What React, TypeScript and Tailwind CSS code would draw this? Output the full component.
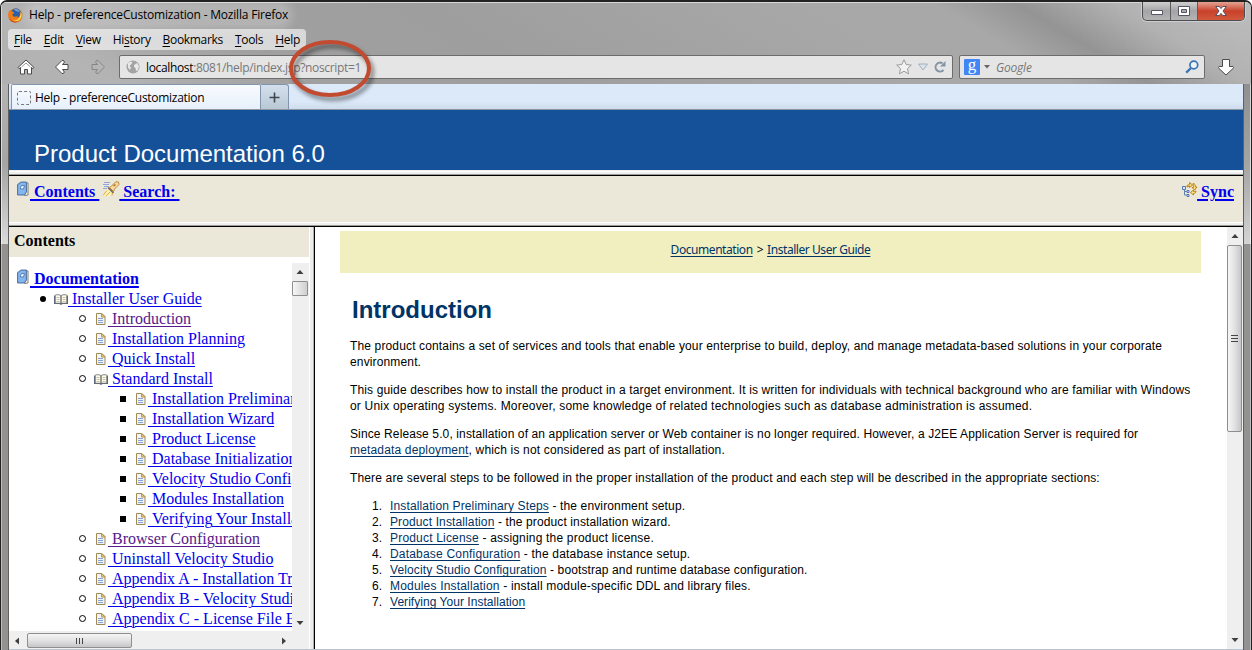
import React from 'react';

const ui = "font-['Open_Sans',sans-serif]";

function FileIcon() {
  return (
    <svg width="10" height="12" viewBox="0 0 10 12" className="shrink-0">
      <path d="M.5.5h5.500l3 3v8h-8.500z" fill="#eef4fd" stroke="#a08a50" />
      <path d="M5.500 .5v3.500h3.500z" fill="#f0c878" stroke="#b89850" />
      <path d="M2 5.500h5M2 7.500h5M2 9.500h5" stroke="#8aa3cf" />
    </svg>
  );
}

function BookOpen() {
  return (
    <svg width="14" height="11" viewBox="0 0 14 11" className="shrink-0">
      <path d="M0 1.500h1.500v-1h4L7 1.500 8.500.5h4v1H14V10H8.500L7 11 5.500 10H0z" fill="#5c6680" />
      <path d="M1.500 1H5.500L6.500 2v7H1.500zM12.500 1H8.500L7.500 2v7h5z" fill="#fffdf0" stroke="#8a8468" strokeWidth=".5" />
      <path d="M2.500 3.500h3M2.500 5.500h3M2.500 7.500h3M8.500 3.500h3M8.500 5.500h3M8.500 7.500h3" stroke="#c2bfaa" />
    </svg>
  );
}

function BookBlue() {
  return (
    <svg width="12" height="16" viewBox="0 0 12 16" className="shrink-0">
      <path d="M9 1.500l2 .5v12l-3.500.5z" fill="#fff7dc" stroke="#6f6f6c" strokeWidth=".9" />
      <path d="M.5 3.500L4 1h5.500v10L7.500 14h-7z" fill="#6ca0dc" stroke="#5878a4" />
      <path d="M1.500 4L4 2h4.500v8.500L7 13H1.500z" fill="#85b6ee" />
      <path d="M3.500 6.500l1-2h3l-1 3.500h-3z" fill="#e4f2ff" stroke="#416da5" strokeWidth=".8" />
    </svg>
  );
}

function SearchLight() {
  return (
    <svg width="17" height="16" viewBox="0 0 17 16" className="shrink-0">
      <path d="M1 1.500h6M0 3.500h6M1 5.500h5M0 7.500h4" stroke="#8ea6d6" />
      <path d="M4 8l5 4-2 3H0z" fill="#fff3b0" />
      <path d="M4 9.500L0 14.500M7 11L3 15M9.500 11.500l-.5 3" stroke="#dca94c" />
      <path d="M6.500 6.500l4 4 1-2.500 4.500-4.500-.5-2.500-2.500-.3L8.500 5z" fill="#f9d9a0" stroke="#c08a3a" />
      <path d="M10.500 5l2-1.500" stroke="#9c7030" strokeWidth="1.500" />
      <path d="M5 6.500l5.500 5.500" stroke="#7b6350" strokeWidth="1.500" />
    </svg>
  );
}

function SyncIcon() {
  return (
    <svg width="16" height="15" viewBox="0 0 16 15" className="shrink-0">
      <path d="M2.500 6v7h3M2.500 9.500h3" stroke="#6580ad" fill="none" />
      <path d="M.5 4.500h3v3h-3zM5 8.500h2v2H5zM5 12.500h2v2H5z" fill="#dfe9fa" stroke="#5477b4" />
      <path d="M5 5V3.500L7.500 2.500V.5l3 2.500-3 2.500V4z" fill="#ffe07a" stroke="#b57a16" strokeWidth=".9" />
      <path d="M11 1.500c1.800 0 2.500 1.500 2.500 3.500H15l-2.500 3L10 5.500h1.500z" fill="#ffe07a" stroke="#b57a16" strokeWidth=".9" />
      <path d="M14 9c0 1.500-1 2.500-2.500 2.500V13L8.500 10.500 11.500 8v1.500z" fill="#ffe07a" stroke="#b57a16" strokeWidth=".9" />
    </svg>
  );
}

function Firefox() {
  return (
    <svg width="15" height="15" viewBox="0 0 15 15" className="shrink-0">
      <circle cx="7.500" cy="7.500" r="7" fill="#e06a12" />
      <circle cx="8" cy="5.500" r="5" fill="#2f5fa6" />
      <path d="M6 1.500c2-1 5 0 6 2-1 0-3 1-6-2z" fill="#6fa6de" />
      <path d="M.8 3.500c.8-1 1.500-1.500 2-1.500.2 1 1 1.500 2 1.800 1 .2 1.500.7 1 1.500l-1.300 1c-.2 2 1.500 3 3.500 2.200 1.500-.5 2 .3 1 1.200 2.500-.3 4-2.500 3.500-6 1.700 2 1.700 5.500-.5 8-2.700 3-8 3-10.500 0C-.2 9.500 0 6 .8 3.500z" fill="#ee7d1a" />
      <path d="M12.500 3.700c1.800 2.500 1.500 5.800-.8 8-1.600 1.700-4.700 2-6.700 1 4 .2 8-2.700 7.500-9z" fill="#fbd34a" />
      <path d="M.8 8.500c1 4.500 6 6.500 10 4.500-3 2.500-9 2-10-4.500z" fill="#b92e15" />
    </svg>
  );
}

function NavArrow({ dim, right }: { dim?: boolean; right?: boolean }) {
  return (
    <svg width="16" height="16" viewBox="0 0 16 16" className={right ? 'shrink-0 scale-x-[-1]' : 'shrink-0'}>
      <path
        d="M1.500 8L8 1.500q1-.7 2 .5t-.3 2L8.500 5.500H14v5H8.500l1.200 1.500q1 1 .2 2t-2 .4z"
        fill={dim ? '#b5b5b5' : '#fff'}
        stroke={dim ? '#858585' : '#4b4b4b'}
        strokeLinejoin="round"
      />
    </svg>
  );
}

function Tri({ dir }: { dir: 'up' | 'down' | 'left' | 'right' }) {
  const d = {
    up: 'M0.500 6L4 2l3.500 4z',
    down: 'M0.500 2L4 6l3.500-4z',
    left: 'M6 .5L2 4l4 3.500z',
    right: 'M2 .5L6 4 2 7.500z',
  }[dir];
  return (
    <svg width="8" height="8" viewBox="0 0 8 8" className="shrink-0">
      <path d={d} fill="#3f3f3f" />
    </svg>
  );
}

function MenuItem({ a, k, b }: { a?: string; k: string; b: string }) {
  return (
    <span>
      {a}
      <span className="underline decoration-1 underline-offset-2">{k}</span>
      {b}
    </span>
  );
}

type Row = { level: 1 | 2 | 3; text: string; open?: boolean; visited?: boolean };

const rows: Row[] = [
  { level: 1, text: 'Installer User Guide', open: true },
  { level: 2, text: 'Introduction', visited: true },
  { level: 2, text: 'Installation Planning' },
  { level: 2, text: 'Quick Install' },
  { level: 2, text: 'Standard Install', open: true },
  { level: 3, text: 'Installation Preliminary Steps' },
  { level: 3, text: 'Installation Wizard' },
  { level: 3, text: 'Product License' },
  { level: 3, text: 'Database Initialization' },
  { level: 3, text: 'Velocity Studio Configuration' },
  { level: 3, text: 'Modules Installation' },
  { level: 3, text: 'Verifying Your Installation' },
  { level: 2, text: 'Browser Configuration', visited: true },
  { level: 2, text: 'Uninstall Velocity Studio' },
  { level: 2, text: 'Appendix A - Installation Troubleshooting' },
  { level: 2, text: 'Appendix B - Velocity Studio' },
  { level: 2, text: 'Appendix C - License File Errors' },
];

const indent = { 1: 'pl-[31px]', 2: 'pl-[71px]', 3: 'pl-[111px]' };

function TreeRow({ row }: { row: Row }) {
  return (
    <li className={`flex h-5 items-center whitespace-nowrap ${indent[row.level]}`}>
      <span className="flex w-[14px] shrink-0 items-center pb-px">
        {row.level === 1 && <span className="size-[6px] rounded-full bg-black" />}
        {row.level === 2 && <span className="-ml-px size-[7px] rounded-full border border-black" />}
        {row.level === 3 && <span className="size-[6px] bg-black" />}
      </span>
      <span className={row.open ? 'flex w-[14px] shrink-0' : 'flex w-[14px] shrink-0 pb-px pl-[2px]'}>
        {row.open ? <BookOpen /> : <FileIcon />}
      </span>
      <a className={`shrink-0 leading-5 underline decoration-1 underline-offset-2 ${row.visited ? 'text-[#551a8b]' : 'text-[#0000ee]'}`}>
        {'\u00a0' + row.text}
      </a>
    </li>
  );
}

const steps: [string, string, string][] = [
  ['Installation Preliminary Steps', ' - the environment setup.', 'tracking-[0.14px]'],
  ['Product Installation', ' - the product installation wizard.', 'tracking-[0.12px]'],
  ['Product License', ' - assigning the product license.', 'tracking-[0.19px]'],
  ['Database Configuration', ' - the database instance setup.', 'tracking-[0.19px]'],
  ['Velocity Studio Configuration', ' - bootstrap and runtime database configuration.', 'tracking-[0.11px]'],
  ['Modules Installation', ' - install module-specific DDL and library files.', 'tracking-[0.18px]'],
  ['Verifying Your Installation', '', 'tracking-[0.04px]'],
];

const link = 'text-[#003366] underline decoration-1 underline-offset-2';
const boldLink = 'font-bold text-[#0000ee] underline decoration-2 underline-offset-2';

function WindowButtons() {
  return (
    <div className="-mt-px flex h-[19px] w-[103px] overflow-hidden rounded-b-[5px] border border-t-0 border-[#4c4c50] bg-gradient-to-b from-[#d0d0d0] via-[#a4a4a6] via-50% to-[#b4b4b5] shadow-[0_0_0_1px_#cfcfcf]">
      <div className="flex w-[28px] items-center justify-center border-r border-[#5c5c5f] pt-[3px]">
        <svg width="12" height="5" viewBox="0 0 12 5"><path d="M.5.5h11v4h-11z" fill="#fff" stroke="#555566" /></svg>
      </div>
      <div className="flex w-[27px] items-center justify-center border-r border-[#5c5c5f]">
        <svg width="12" height="10" viewBox="0 0 12 10">
          <path d="M.5.5h11v9h-11z" fill="#fff" stroke="#555566" />
          <path d="M3.500 3.500h5v3h-5z" fill="#aaa" stroke="#555566" />
        </svg>
      </div>
      <div className="flex flex-1 items-center justify-center bg-gradient-to-b from-[#e4a294] via-[#c8402a] via-50% to-[#d2583c]">
        <svg width="12" height="10" viewBox="0 0 12 10">
          <path d="M.7.5h3.500L6 2.600 7.800.5h3.500L8 5l3.300 4.500H7.800L6 7.400 4.200 9.500H.7L4 5z" fill="#fff" stroke="#4c4656" strokeWidth=".9" />
        </svg>
      </div>
    </div>
  );
}

export default function App() {
  return (
    <div className="relative flex h-[650px] w-[1252px] flex-col overflow-hidden rounded-t-[7px] border-x border-t-2 border-[#222] bg-[#9d9d9d] text-black">
      <div className="flex h-[82px] shrink-0 flex-col border-t border-l border-[#d8d8d8] bg-[linear-gradient(31deg,#b0b0b0_0%,#b4b4b4_8%,#a0a0a0_22%,#9e9e9e_40%,#a8a8a8_68%,#a8a8a8_77%,#949494_83%,#b2b2b2_90%,#bdbdbd_100%)]">
        <div className="flex h-[26px] justify-between pr-[6px] pl-[6px]">
          <div className="flex items-center gap-[6px] pb-[2px]">
            <Firefox />
            <span className={`${ui} rounded-full bg-white/20 text-[12px] leading-5 tracking-[-0.2px] whitespace-nowrap shadow-[0_0_9px_5px_rgba(255,255,255,0.2)]`}>
              Help - preferenceCustomization - Mozilla Firefox
            </span>
          </div>
          <WindowButtons />
        </div>
        <div className={`${ui} ml-[6px] flex h-[21px] w-[298px] items-center justify-between rounded-[4px] bg-white/60 pr-[6px] pl-[6px] text-[12px] tracking-[-0.3px]`}>
          <MenuItem k="F" b="ile" />
          <MenuItem k="E" b="dit" />
          <MenuItem k="V" b="iew" />
          <MenuItem a="Hi" k="s" b="tory" />
          <MenuItem k="B" b="ookmarks" />
          <MenuItem k="T" b="ools" />
          <MenuItem k="H" b="elp" />
        </div>
        <div className={`${ui} flex h-[34px] items-center pb-[1px] pl-[15px] text-[12px]`}>
          <svg width="18" height="16" viewBox="0 0 18 16">
            <path d="M1 8.500L9 1l8 7.500-1 1.200-1.500-1.200V15h-4v-4.500h-3V15h-4V8.500L2 9.700z" fill="#fff" stroke="#4a4a4a" strokeLinejoin="round" />
            <path d="M4.500 8L9 4l4.500 4" fill="none" stroke="#777" strokeWidth=".8" />
          </svg>
          <div className="ml-[19px] flex"><NavArrow /></div>
          <div className="ml-[20px] flex"><NavArrow dim right /></div>
          <div className="ml-[13px] flex h-6 w-[834px] items-center rounded-[2px] border border-[#6c6c6c] bg-[#e5e5e5] pr-[5px] pl-[6px]">
            <svg width="14" height="14" viewBox="0 0 14 14">
              <circle cx="7" cy="7" r="6.500" fill="#a3a3a3" />
              <path d="M2 3l3-1.500 1.500 1L5 4.500 3.500 6 5 7.500 4 10 2 7.500zM8 5l3-2 2 3-1 4-2 1-.5-3L8 7z" fill="#e8e8e8" />
            </svg>
            <span className="ml-[6px] pt-[2px] tracking-[-0.34px] whitespace-nowrap text-[#777]">
              <span className="tracking-[-0.35px] text-black">localhost</span>:8081/help/index.jsp?noscript=1
            </span>
            <svg className="ml-auto" width="16" height="16" viewBox="0 0 16 16">
              <path d="M8 .8l2.200 4.700 5.100.6-3.800 3.500 1 5.200L8 12.200l-4.500 2.600 1-5.200L.7 6.100l5.100-.6z" fill="#f2f2f2" stroke="#9a9a9a" />
            </svg>
            <svg className="ml-[6px]" width="10" height="8" viewBox="0 0 10 8"><path d="M.5 1h9L5 7z" fill="#dbe3ec" stroke="#a3b0bd" /></svg>
            <svg className="mr-px ml-[6px]" width="12" height="12" viewBox="0 0 12 12">
              <path d="M9.500 9A4.500 4.500 0 1 1 8.500 2.300" fill="none" stroke="#8395a5" strokeWidth="2" />
              <path d="M11.500 0v5.500H6z" fill="#8395a5" />
            </svg>
          </div>
          <div className="ml-[6px] flex h-6 w-[246px] items-center rounded-[2px] border border-[#6c6c6c] bg-[#e5e5e5] pr-[5px] pl-[4px]">
            <span className="flex size-4 items-center justify-center rounded-[1px] bg-[#4285f4] pb-[3px] font-['Liberation_Serif',serif] text-[17px] leading-4 text-white">g</span>
            <svg className="ml-[4px]" width="6" height="4" viewBox="0 0 6 4"><path d="M0 0h6L3 3.500z" fill="#666" /></svg>
            <span className="ml-[6px] pt-[2px] tracking-[-0.2px] text-[#777] italic">Google</span>
            <svg className="ml-auto" width="14" height="14" viewBox="0 0 14 14">
              <circle cx="8.800" cy="5" r="3.900" fill="#eef4fa" stroke="#3a76b0" strokeWidth="1.700" />
              <path d="M6 8L1.200 12.700" stroke="#3a76b0" strokeWidth="2.400" />
            </svg>
          </div>
          <svg className="ml-[12px]" width="18" height="18" viewBox="0 0 18 18">
            <path d="M5.500 1.500h7v7H16q1 1 0 2l-7 6.500-7-6.500q-1-1 0-2h3.500z" fill="#fff" stroke="#4d4d4d" strokeLinejoin="round" />
          </svg>
        </div>
      </div>

      <div className="flex min-h-0 flex-1">
        <div className="flex w-[8px] shrink-0 flex-col border-r border-[#606060]">
          <div className="h-[160px] border-l border-white/60 bg-gradient-to-b from-[#b4b4b4] via-[#a4a4a4] to-[#dadada]" />
          <div className="flex-1 border-l border-white/40 bg-[#949290]" />
        </div>

        <div className="flex w-[1234px] flex-col bg-white">
          <div className={`${ui} flex h-[26px] shrink-0 items-stretch border-b border-[#8b97a3] bg-gradient-to-b from-[#dbe9f9] from-70% to-[#cddbea] pl-[2px] text-[12px]`}>
            <div className="flex w-[250px] items-center rounded-t-[2px] border-x border-t border-[#8295ac] bg-gradient-to-b from-[#f8fbff] to-[#e7f0fb] pt-px pl-[5px]">
              <span className="size-[14px] rounded-[2px] border border-dashed border-[#777]" />
              <span className="ml-[4px] tracking-[-0.28px] whitespace-nowrap">Help - preferenceCustomization</span>
            </div>
            <div className="flex w-[28px] items-center justify-center rounded-tr-[3px] border-t border-r border-[#8295ac] bg-gradient-to-b from-[#d3dfec] to-[#bac8d6] pt-px">
              <svg width="11" height="11" viewBox="0 0 11 11"><path d="M5.500.5v10M.5 5.500h10" stroke="#3e4650" strokeWidth="1.600" /></svg>
            </div>
          </div>

          <div className="flex h-[60px] shrink-0 items-end bg-[#145199] pl-[25px] font-['Liberation_Sans',Arial,sans-serif] text-[24px] leading-8 text-white">
            Product Documentation 6.0
          </div>
          <div className="flex h-[6px] shrink-0 flex-col border-b border-black bg-[#efefed]">
            <div className="h-[1px]" />
            <div className="h-[1px] bg-white" />
            <div className="flex-1" />
            <div className="h-[1px] bg-[#9c9c98]" />
          </div>
          <div className="flex h-[46px] shrink-0 items-start justify-between bg-[#ebe8d9] pt-[5px] pr-[9px] pl-[8px] font-['Liberation_Serif',serif] text-[16px] leading-[22px]">
            <div className="flex">
              <BookBlue />
              <a className={`ml-[1px] ${boldLink}`}>{'\u00a0Contents\u00a0'}</a>
              <span className="ml-[4px] -mr-px flex"><SearchLight /></span>
              <a className={boldLink}>{'\u00a0Search:\u00a0'}</a>
            </div>
            <div className="flex">
              <span className="-mr-px flex pt-px"><SyncIcon /></span>
              <a className={boldLink}>{'\u00a0Sync'}</a>
            </div>
          </div>
          <div className="flex h-[5px] shrink-0 flex-col border-b border-black bg-[#efefed]">
            <div className="h-[1px] bg-white" />
            <div className="flex-1" />
            <div className="h-[1px] bg-[#9c9c98]" />
          </div>

          <div className="flex min-h-0 flex-1 border-b border-[#b8c4d0]">
            <div className="flex w-[300px] shrink-0 flex-col font-['Liberation_Serif',serif] text-[16px]">
              <div className="flex h-[30px] shrink-0 items-center bg-[#ebe8d9] pb-[2px] pl-[5px] font-bold">Contents</div>
              <div className="flex h-[374px] shrink-0">
                <div className="w-[283px] shrink-0 overflow-hidden pt-[12px]">
                  <div className="flex h-5 items-center pl-[8px]">
                    <span className="flex pb-[4px]"><BookBlue /></span>
                    <a className={`ml-[1px] leading-5 ${boldLink}`}>{'\u00a0Documentation'}</a>
                  </div>
                  <ul>{rows.map((r) => <TreeRow key={r.text} row={r} />)}</ul>
                </div>
                <div className="mt-[6px] flex w-[17px] flex-col items-center justify-between bg-[#efefef] pr-px pb-[4px]">
                  <div className="flex flex-col items-center">
                    <span className="flex h-[18px] items-center"><Tri dir="up" /></span>
                    <span className="h-[15px] w-[16px] rounded-[1px] border border-[#8e8e8e] bg-gradient-to-r from-[#f6f6f6] to-[#cfcfcf]" />
                  </div>
                  <Tri dir="down" />
                </div>
              </div>
              <div className="flex flex-1 bg-[#efefef] pt-[1px]">
                <div className="flex w-[283px] items-center pl-[4px]">
                  <Tri dir="left" />
                  <div className="ml-[6px] flex h-[15px] w-[105px] items-center justify-center gap-[2px] rounded-[2px] border border-[#8e8e8e] bg-gradient-to-b from-[#f6f6f6] via-[#e2e2e4] to-[#c6c6c8]">
                    <i className="h-[6px] w-px bg-[#444]" />
                    <i className="h-[6px] w-px bg-[#444]" />
                    <i className="h-[6px] w-px bg-[#444]" />
                  </div>
                  <span className="mr-[4px] ml-auto flex"><Tri dir="right" /></span>
                </div>
              </div>
            </div>
            <div className="flex w-[6px] shrink-0 justify-end border-r border-l border-r-black border-l-white bg-[#ececec]">
              <div className="w-px bg-[#b0b0b0]" />
            </div>

            <div className="flex w-[912px] shrink-0 flex-col pt-[4px] pr-[26px] pl-[25px] font-['Liberation_Sans',Arial,sans-serif] text-[12px] leading-4">
              <div className="flex h-[42px] shrink-0 justify-center bg-[#f1efc0] pt-[10px]">
                <span className="font-['Noto_Sans',sans-serif] text-[12px] leading-[18px] tracking-[-0.44px] whitespace-pre">
                  <a className={link}>Documentation</a>
                  <span className="px-[4px]">&gt;</span>
                  <a className={link}>Installer User Guide</a>
                </span>
              </div>
              <div className="pl-[10px] whitespace-nowrap">
                <h1 className="mt-[22px] pl-[2px] text-[24px] leading-[30px] font-bold text-[#003366]">Introduction</h1>
                <p className="mt-[13px] tracking-[0.143px]">
                  The product contains a set of services and tools that enable your enterprise to build, deploy, and manage metadata-based solutions in your corporate
                  <br />environment.
                </p>
                <p className="mt-[12px] tracking-[0.135px]">
                  This guide describes how to install the product in a target environment. It is written for individuals with technical background who are familiar with Windows
                  <br /><span className="tracking-[0.195px]">or Unix operating systems. Moreover, some knowledge of related technologies such as database administration is assumed.</span>
                </p>
                <p className="mt-[12px] tracking-[0.118px]">
                  Since Release 5.0, installation of an application server or Web container is no longer required. However, a J2EE Application Server is required for
                  <br /><span className="tracking-[0.165px]"><a className={link}>metadata deployment</a>, which is not considered as part of installation.</span>
                </p>
                <p className="mt-[12px] tracking-[0.147px]">
                  There are several steps to be followed in the proper installation of the product and each step will be described in the appropriate sections:
                </p>
                <ol className="mt-[12px]">
                  {steps.map(([a, b, fit], i) => (
                    <li key={a} className="flex">
                      <span className="w-[32px] text-right">{i + 1}.</span>
                      <span className={`ml-[8px] whitespace-pre ${fit}`}><a className={link}>{a}</a>{b}</span>
                    </li>
                  ))}
                </ol>
              </div>
            </div>

            <div className="flex w-[16px] shrink-0 flex-col items-start bg-[#efefef] pb-[5px]">
              <span className="flex h-[18px] items-center pl-[4px]"><Tri dir="up" /></span>
              <div className="flex h-[187px] w-[15px] flex-col items-center justify-center gap-[2px] rounded-[2px] border border-[#8e8e8e] bg-gradient-to-r from-[#f6f6f6] via-[#e2e2e4] to-[#c6c6c8]">
                <i className="h-px w-[7px] bg-[#444]" />
                <i className="h-px w-[7px] bg-[#444]" />
                <i className="h-px w-[7px] bg-[#444]" />
              </div>
              <span className="mt-auto flex pl-[4px]"><Tri dir="down" /></span>
            </div>
          </div>
        </div>

        <div className="flex flex-1 flex-col border-l border-[#606060]">
          <div className="h-[160px] border-r border-white/60 bg-gradient-to-b from-[#909090] via-[#a4a4a4] to-[#d4d4d4]" />
          <div className="flex-1 border-r border-white/40 bg-[#949290]" />
        </div>
      </div>

      <svg className="absolute top-[34px] left-[283px] drop-shadow-[3px_4px_2px_rgba(0,0,0,0.45)]" width="94" height="68" viewBox="0 0 94 68">
        <ellipse cx="46" cy="32.500" rx="39" ry="26.500" fill="none" stroke="#c24a30" strokeWidth="4" />
      </svg>
    </div>
  );
}
